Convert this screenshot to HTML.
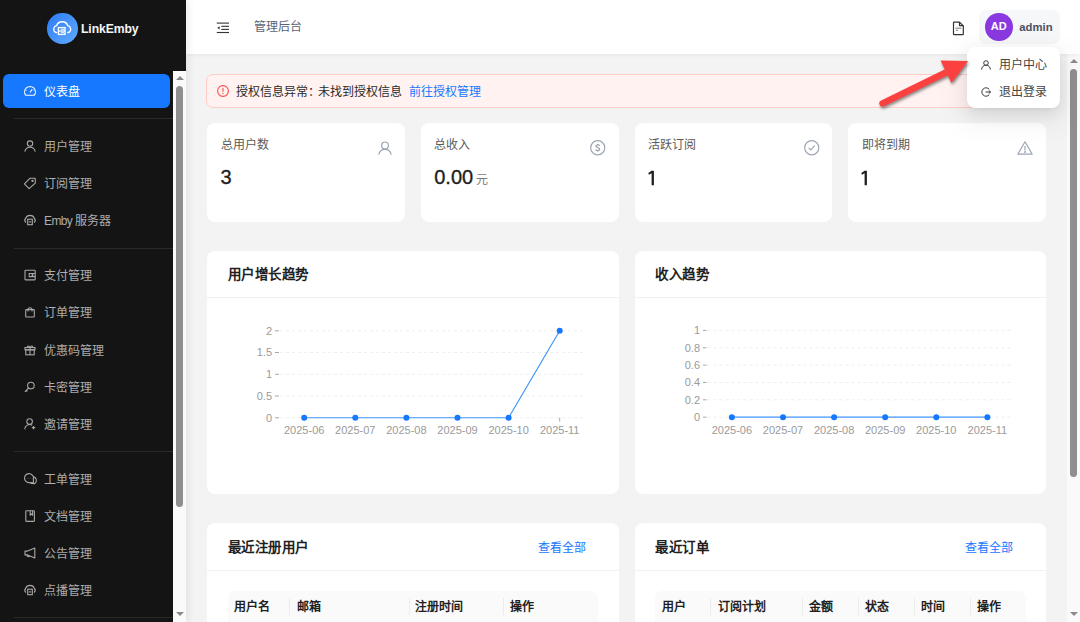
<!DOCTYPE html>
<html lang="zh-CN"><head><meta charset="utf-8">
<style>
*{box-sizing:border-box;margin:0;padding:0}
html,body{width:1080px;height:622px;overflow:hidden;background:#f3f3f3;font-family:"Liberation Sans",sans-serif;}
.abs{position:absolute}
#side{position:absolute;z-index:4;left:0;top:0;width:186px;height:622px;background:#141414;box-shadow:2px 0 8px rgba(0,0,0,0.08)}
.logo{position:absolute;left:47.4px;top:13.4px;width:30.5px;height:30.5px;border-radius:50%;background:linear-gradient(135deg,#2b7bf4 0%,#62abff 100%)}
.brand{position:absolute;left:81px;top:19px;font-size:12.2px;font-weight:bold;color:#f5f5f5;line-height:20px;letter-spacing:-0.1px}
.mi{position:absolute;left:0;width:173px;height:34px;color:rgba(255,255,255,0.66);font-size:12px;line-height:34px}
.mi .ic{position:absolute;left:23.5px;top:11px;width:12px;height:12px}
.mi .tx{position:absolute;left:44px;top:1px}
.mi.act{left:3px;width:167px;background:#1677ff;border-radius:6px;color:#fff}
.mi.act .ic{left:20.5px}
.mi.act .tx{left:41px}
.dv{position:absolute;left:13.75px;width:160px;height:1px;background:#2a2a2a}
.sb{position:absolute;background:#fafafa}
.thumb{position:absolute;background:#8f8f8f;border-radius:4px}
.tri-up{position:absolute;width:0;height:0;border-left:4px solid transparent;border-right:4px solid transparent;border-bottom:4px solid #8a8a8a}
.tri-dn{position:absolute;width:0;height:0;border-left:4px solid transparent;border-right:4px solid transparent;border-top:4px solid #8a8a8a}
#hdr{position:absolute;z-index:1;left:186px;top:0;width:894px;height:54px;background:#fff;box-shadow:0 1px 4px rgba(0,0,0,0.06)}
.card{position:absolute;background:#fff;border-radius:8px}
.st .t{position:absolute;left:13.5px;top:12px;font-size:12px;line-height:20px;color:#5a5a5a}
.st .v{position:absolute;left:13.5px;top:164px;font-size:20px;line-height:26px;color:#1f1f1f;-webkit-text-stroke:0.35px #1f1f1f}
.ch .t{position:absolute;left:20.5px;top:13px;font-size:13.5px;letter-spacing:0.5px;line-height:22px;font-weight:bold;color:#1f1f1f}
.ch .ln{position:absolute;left:0;right:0;top:46px;height:1px;background:#f0f0f0}
svg{display:block;overflow:visible}
.ax{font-size:11px;fill:#9a9a9a;font-family:"Liberation Sans",sans-serif}
.th{position:absolute;font-size:12px;font-weight:bold;color:#1f1f1f;line-height:20px}
.sep{position:absolute;width:1px;height:17px;background:#ececec}
</style></head><body>

<!-- SIDEBAR -->
<div id="side">
  <div class="logo">
    <svg width="30.5" height="30.5" viewBox="0 0 30.5 30.5"><g fill="none" stroke="#fff" stroke-width="1.35" stroke-linecap="round">
      <path d="M9.6 19.6 C7.4 19.2 6.4 17.4 6.8 15.5 C7.1 13.9 8.3 12.9 9.6 12.7 C10.4 10.2 12.5 8.7 15.2 8.7 C17.9 8.7 20 10.2 20.8 12.7 C22.2 12.9 23.3 13.9 23.6 15.5 C24 17.4 23 19.2 20.8 19.6"/>
      <rect x="11.4" y="14.6" width="6.6" height="6.8" stroke-linecap="butt"/>
      <line x1="11.4" y1="18" x2="18" y2="18" stroke-linecap="butt"/><line x1="14.2" y1="16.3" x2="16.6" y2="16.3" stroke-width="0.9"/><line x1="14.2" y1="19.7" x2="16.6" y2="19.7" stroke-width="0.9"/></g></svg>
  </div>
  <div class="brand">LinkEmby</div>

  <div class="mi act" style="top:74px"><svg class="ic" viewBox="0 0 12 12"><g fill="none" stroke="#fff" stroke-width="1.1"><path d="M1.8 10.3 A5.4 5.4 0 1 1 10.2 10.3 Z" stroke-linejoin="round"/><path d="M6 7.4 L8.2 4.3"/><path d="M1.5 5.2h1.1M9.4 5.2h1.1M6 1.5v1"/></g></svg><span class="tx">仪表盘</span></div>
  <div class="dv" style="top:118px"></div>
  <div class="mi" style="top:129px"><svg class="ic" viewBox="0 0 12 12"><g fill="none" stroke="#a8a8a8" stroke-width="1.1"><circle cx="6" cy="3.6" r="2.7"/><path d="M0.8 11.6 A5.3 5.3 0 0 1 11.2 11.6"/></g></svg><span class="tx">用户管理</span></div>
  <div class="mi" style="top:166.2px"><svg class="ic" viewBox="0 0 12 12"><g fill="none" stroke="#a8a8a8" stroke-width="1.1" stroke-linejoin="round"><path d="M6.1 1.2 L11.2 1.2 L11.3 6.1 L5.1 11.6 L0.4 6.8 Z"/><circle cx="8.5" cy="3.9" r="0.6" fill="#a8a8a8"/></g></svg><span class="tx">订阅管理</span></div>
  <div class="mi" style="top:203.4px"><svg class="ic" viewBox="0 0 12 12" style="top:10.5px"><g fill="none" stroke="#a8a8a8" stroke-width="1.1"><path d="M2 8.6 A3 3 0 0 1 1.6 4.4 A4.6 4.2 0 0 1 10.4 4.4 A3 3 0 0 1 10 8.6"/><rect x="3.7" y="5.2" width="4.6" height="5.5"/><path d="M4.8 7.9h2.4"/></g></svg><span class="tx"><span style="letter-spacing:-0.6px">Emby </span>服务器</span></div>
  <div class="dv" style="top:247.5px"></div>
  <div class="mi" style="top:258.2px"><svg class="ic" viewBox="0 0 12 12"><g fill="none" stroke="#a8a8a8" stroke-width="1.1"><rect x="1" y="1.3" width="10.2" height="9.6" rx="0.6"/><path d="M11.2 4.5 H5.2 V7.6 H11.2"/><circle cx="8.5" cy="6" r="0.5" fill="#a8a8a8"/></g></svg><span class="tx">支付管理</span></div>
  <div class="mi" style="top:295.4px"><svg class="ic" viewBox="0 0 12 12"><g fill="none" stroke="#a8a8a8" stroke-width="1.1"><rect x="1.7" y="3.6" width="8.6" height="7.4" rx="0.6"/><path d="M4 5.4 V3.7 A2 2 0 0 1 8 3.7 V5.4"/></g></svg><span class="tx">订单管理</span></div>
  <div class="mi" style="top:332.6px"><svg class="ic" viewBox="0 0 12 12"><g fill="none" stroke="#a8a8a8" stroke-width="1.1"><rect x="1" y="3.5" width="10" height="2.3"/><rect x="1.8" y="5.8" width="8.4" height="5"/><path d="M6 3.5 V10.8"/><path d="M6 3.4 C4.8 1.2 2.8 2 3.9 3.4 M6 3.4 C7.2 1.2 9.2 2 8.1 3.4"/></g></svg><span class="tx">优惠码管理</span></div>
  <div class="mi" style="top:369.8px"><svg class="ic" viewBox="0 0 12 12"><g fill="none" stroke="#a8a8a8" stroke-width="1.1"><circle cx="6.9" cy="4.6" r="3.3"/><path d="M4.6 7 L0.9 10.9 M2.3 9.5 L3.3 10.5"/></g></svg><span class="tx">卡密管理</span></div>
  <div class="mi" style="top:407px"><svg class="ic" viewBox="0 0 12 12"><g fill="none" stroke="#a8a8a8" stroke-width="1.1"><circle cx="5.6" cy="3.6" r="2.8"/><path d="M0.7 11.2 A5 5 0 0 1 8.2 7.2"/><path d="M7.8 9.6h3.4M9.5 7.9v3.4"/></g></svg><span class="tx">邀请管理</span></div>
  <div class="dv" style="top:451.2px"></div>
  <div class="mi" style="top:461.8px"><svg class="ic" viewBox="0 0 12 12"><g fill="none" stroke="#a8a8a8" stroke-width="1.1"><path d="M5.2 9.6 A4.5 4.5 0 1 1 9.3 6.5 L9.6 9.9 Z"/><path d="M9.4 3.6 A4 4 0 0 1 10.9 10.6 L6.6 10.4" /><circle cx="3.1" cy="5.2" r="0.4" fill="#8a8a8a" stroke="none"/><circle cx="4.9" cy="5.2" r="0.4" fill="#8a8a8a" stroke="none"/><circle cx="6.7" cy="5.2" r="0.4" fill="#8a8a8a" stroke="none"/></g></svg><span class="tx">工单管理</span></div>
  <div class="mi" style="top:499px"><svg class="ic" viewBox="0 0 12 12"><g fill="none" stroke="#a8a8a8" stroke-width="1.1"><rect x="1.8" y="0.8" width="8.6" height="10.6" rx="0.6"/><path d="M6.2 0.8 V5 L7.4 4 L8.6 5 V0.8"/></g></svg><span class="tx">文档管理</span></div>
  <div class="mi" style="top:536.2px"><svg class="ic" viewBox="0 0 12 12"><g fill="none" stroke="#a8a8a8" stroke-width="1.1" stroke-linejoin="round"><path d="M1 4.1 H3.6 L10.8 1.1 V10.9 L3.6 7.9 H1 Z"/><path d="M3 8 A1.4 1.4 0 0 0 5.6 8.9"/></g></svg><span class="tx">公告管理</span></div>
  <div class="mi" style="top:573.4px"><svg class="ic" viewBox="0 0 12 12" style="top:10.5px"><g fill="none" stroke="#a8a8a8" stroke-width="1.1"><path d="M2 8.6 A3 3 0 0 1 1.6 4.4 A4.6 4.2 0 0 1 10.4 4.4 A3 3 0 0 1 10 8.6"/><rect x="3.7" y="5.2" width="4.6" height="5.5"/><path d="M4.8 7.9h2.4"/></g></svg><span class="tx">点播管理</span></div>
  <div class="dv" style="top:617px"></div>

  <div class="sb" style="left:173px;top:71px;width:13px;height:551px"></div>
  <div class="tri-up" style="left:175.5px;top:75.5px"></div>
  <div class="thumb" style="left:176px;top:86px;width:7px;height:421px"></div>
  <div class="tri-dn" style="left:175.5px;top:612px"></div>
</div>

<!-- MAIN SCROLLBAR -->
<div class="sb" style="left:1067px;top:54px;width:13px;height:568px"></div>
<div class="tri-up" style="left:1069.5px;top:59px"></div>
<div class="thumb" style="left:1070px;top:69px;width:7px;height:408px"></div>
<div class="tri-dn" style="left:1069.5px;top:612px"></div>

<!-- CONTENT -->
<div id="content">
  <!-- alert -->
  <div class="abs" style="left:206px;top:74px;width:840px;height:34px;background:#fff2f0;border:1px solid #ffcdc6;border-radius:7px"></div>
  <svg class="abs" style="left:217px;top:85px" width="12" height="12" viewBox="0 0 12 12"><circle cx="6" cy="6" r="5.4" fill="none" stroke="#ff4d4f" stroke-width="1.1"/><rect x="5.45" y="2.9" width="1.1" height="3.9" fill="#ff4d4f"/><rect x="5.45" y="7.9" width="1.1" height="1.1" fill="#ff4d4f"/></svg>
  <div class="abs" style="left:236px;top:82px;font-size:12px;line-height:20px;color:#2b2b2b;white-space:nowrap">授权信息异常<span style="letter-spacing:-2px">：</span>未找到授权信息<span style="color:#1677ff;margin-left:7px">前往授权管理</span></div>

  <!-- stat cards -->
  <div class="card st" style="left:207px;top:122.5px;width:197.75px;height:99.5px">
    <div class="t">总用户数</div>
    <div class="v" style="top:41.5px">3</div>
    <svg class="abs" style="left:170.5px;top:18.5px" width="14" height="14" viewBox="0 0 14 14"><g fill="none" stroke="#9ea6b3" stroke-width="1.2"><circle cx="7" cy="4.4" r="3.4"/><path d="M0.8 13.6 A6.3 6.3 0 0 1 13.2 13.6"/></g></svg>
  </div>
  <div class="card st" style="left:420.75px;top:122.5px;width:197.75px;height:99.5px">
    <div class="t">总收入</div>
    <div class="v" style="top:41.5px">0.00<span style="font-size:12px;color:#7a7a7a;margin-left:3px;-webkit-text-stroke:0">元</span></div>
    <svg class="abs" style="left:169.5px;top:17.4px" width="15.5" height="15.5" viewBox="0 0 16 16"><g fill="none" stroke="#9ea6b3" stroke-width="1.2"><circle cx="8" cy="8" r="7.3"/><path d="M9.9 6 C9.7 5.3 9 5 8 5 C6.9 5 6.2 5.5 6.2 6.3 C6.2 8.1 10 7.5 10 9.6 C10 10.5 9.2 11 8 11 C6.9 11 6.2 10.6 6 9.8 M8 4 V5 M8 11 V12" stroke-width="1.4"/></g></svg>
  </div>
  <div class="card st" style="left:634.5px;top:122.5px;width:197.75px;height:99.5px">
    <div class="t">活跃订阅</div>
    <svg class="abs" style="left:13px;top:47px" width="8" height="16" viewBox="0 0 8 16"><path d="M3.6 0.7 H5.9 V15.2 H3.6 V3.3 L0.9 4.7 L0.3 3.1 Z" fill="#1f1f1f"/></svg>
    <svg class="abs" style="left:169.5px;top:17.4px" width="15.5" height="15.5" viewBox="0 0 16 16"><g fill="none" stroke="#9ea6b3" stroke-width="1.2"><circle cx="8" cy="8" r="7.3"/><path d="M4.8 8.2 L7 10.3 L11.2 5.9"/></g></svg>
  </div>
  <div class="card st" style="left:848.25px;top:122.5px;width:197.75px;height:99.5px">
    <div class="t">即将到期</div>
    <svg class="abs" style="left:13px;top:47px" width="8" height="16" viewBox="0 0 8 16"><path d="M3.6 0.7 H5.9 V15.2 H3.6 V3.3 L0.9 4.7 L0.3 3.1 Z" fill="#1f1f1f"/></svg>
    <svg class="abs" style="left:168.5px;top:18.5px" width="16" height="14" viewBox="0 0 16 14"><g fill="none" stroke="#9ea6b3" stroke-width="1.2" stroke-linejoin="round"><path d="M8 0.8 L15.2 13.2 H0.8 Z"/><path d="M8 5 V9.5"/><circle cx="8" cy="11" r="0.4" fill="#9ea6b3"/></g></svg>
  </div>

  <!-- chart cards -->
  <div class="card ch" style="left:207px;top:251px;width:412px;height:243px">
    <div class="t">用户增长趋势</div>
    <div class="ln"></div>
    <svg class="abs" style="left:0;top:0" width="412" height="243" viewBox="207 251 412 243">
      <g stroke="#eeeeee" stroke-width="1" stroke-dasharray="3 3">
        <path d="M280 330.8 H583"/><path d="M280 352.5 H583"/><path d="M280 374.3 H583"/><path d="M280 396 H583"/><path d="M280 417.75 H583"/>
      </g>
      <g stroke="#a8a8a8" stroke-width="1">
        <path d="M275 330.8 H279 M275 352.5 H279 M275 374.3 H279 M275 396 H279 M275 417.75 H279"/>
        <path d="M559.7 417.75 V421.5"/>
      </g>
      <g class="ax" text-anchor="end">
        <text x="272" y="334.6">2</text><text x="272" y="356.3">1.5</text><text x="272" y="378.1">1</text><text x="272" y="399.8">0.5</text><text x="272" y="421.5">0</text>
      </g>
      <g class="ax" text-anchor="middle">
        <text x="304.2" y="434">2025-06</text><text x="355.3" y="434">2025-07</text><text x="406.4" y="434">2025-08</text><text x="457.5" y="434">2025-09</text><text x="508.6" y="434">2025-10</text><text x="559.7" y="434">2025-11</text>
      </g>
      <path d="M304.2 417.75 H508.6 L559.7 330.8" fill="none" stroke="#4096ff" stroke-width="1.2"/>
      <g fill="#1677ff"><circle cx="304.2" cy="417.75" r="3"/><circle cx="355.3" cy="417.75" r="3"/><circle cx="406.4" cy="417.75" r="3"/><circle cx="457.5" cy="417.75" r="3"/><circle cx="508.6" cy="417.75" r="3"/><circle cx="559.7" cy="330.8" r="3"/></g>
    </svg>
  </div>
  <div class="card ch" style="left:634.5px;top:251px;width:411.5px;height:243px">
    <div class="t">收入趋势</div>
    <div class="ln"></div>
    <svg class="abs" style="left:0;top:0" width="412" height="243" viewBox="634.5 251 412 243">
      <g stroke="#eeeeee" stroke-width="1" stroke-dasharray="3 3">
        <path d="M707 330.4 H1010"/><path d="M707 347.8 H1010"/><path d="M707 365.1 H1010"/><path d="M707 382.5 H1010"/><path d="M707 399.8 H1010"/><path d="M707 417.2 H1010"/>
      </g>
      <g stroke="#a8a8a8" stroke-width="1">
        <path d="M702.5 330.4 H706 M702.5 347.8 H706 M702.5 365.1 H706 M702.5 382.5 H706 M702.5 399.8 H706 M702.5 417.2 H706"/>
      </g>
      <g class="ax" text-anchor="end">
        <text x="699.5" y="334.2">1</text><text x="699.5" y="351.6">0.8</text><text x="699.5" y="368.9">0.6</text><text x="699.5" y="386.3">0.4</text><text x="699.5" y="403.6">0.2</text><text x="699.5" y="421">0</text>
      </g>
      <g class="ax" text-anchor="middle">
        <text x="731.4" y="434">2025-06</text><text x="782.5" y="434">2025-07</text><text x="833.6" y="434">2025-08</text><text x="884.7" y="434">2025-09</text><text x="935.8" y="434">2025-10</text><text x="986.9" y="434">2025-11</text>
      </g>
      <path d="M731.4 417.2 H986.9" fill="none" stroke="#4096ff" stroke-width="1.2"/>
      <g fill="#1677ff"><circle cx="731.4" cy="417.2" r="3"/><circle cx="782.5" cy="417.2" r="3"/><circle cx="833.6" cy="417.2" r="3"/><circle cx="884.7" cy="417.2" r="3"/><circle cx="935.8" cy="417.2" r="3"/><circle cx="986.9" cy="417.2" r="3"/></g>
    </svg>
  </div>

  <!-- table cards -->
  <div class="card ch" style="left:207px;top:523px;width:412px;height:200px">
    <div class="t" style="top:13.5px">最近注册用户</div>
    <div class="abs" style="left:331px;top:14.5px;font-size:12px;line-height:20px;color:#1677ff">查看全部</div>
    <div class="ln" style="top:46.5px;background:#f2f2f2"></div>
    <div class="abs" style="left:20.5px;top:67.5px;width:370.5px;height:60px;background:#fafafa;border-radius:7px"></div>
    <div class="th" style="left:27px;top:73.5px">用户名</div>
    <div class="sep" style="left:82.4px;top:75px"></div>
    <div class="th" style="left:90px;top:73.5px">邮箱</div>
    <div class="sep" style="left:201.9px;top:75px"></div>
    <div class="th" style="left:208.2px;top:73.5px">注册时间</div>
    <div class="sep" style="left:295.7px;top:75px"></div>
    <div class="th" style="left:303px;top:73.5px">操作</div>
  </div>
  <div class="card ch" style="left:634.5px;top:523px;width:411.5px;height:200px">
    <div class="t" style="top:13.5px">最近订单</div>
    <div class="abs" style="left:330px;top:14.5px;font-size:12px;line-height:20px;color:#1677ff">查看全部</div>
    <div class="ln" style="top:46.5px;background:#f2f2f2"></div>
    <div class="abs" style="left:20px;top:67.5px;width:371px;height:60px;background:#fafafa;border-radius:7px"></div>
    <div class="th" style="left:27px;top:73.5px">用户</div>
    <div class="sep" style="left:75px;top:75px"></div>
    <div class="th" style="left:83px;top:73.5px">订阅计划</div>
    <div class="sep" style="left:167px;top:75px"></div>
    <div class="th" style="left:174.3px;top:73.5px">金额</div>
    <div class="sep" style="left:223.2px;top:75px"></div>
    <div class="th" style="left:230.3px;top:73.5px">状态</div>
    <div class="sep" style="left:279.2px;top:75px"></div>
    <div class="th" style="left:286.5px;top:73.5px">时间</div>
    <div class="sep" style="left:335px;top:75px"></div>
    <div class="th" style="left:342.4px;top:73.5px">操作</div>
  </div>
</div>

<!-- DROPDOWN -->
<div id="dd" style="position:absolute;z-index:2;left:0;top:0;width:1080px;height:0;white-space:nowrap">
<div class="abs" style="left:967px;top:47.4px;width:93px;height:60.2px;background:#fff;border-radius:8px;box-shadow:0 6px 16px 0 rgba(0,0,0,0.08),0 3px 6px -4px rgba(0,0,0,0.12),0 9px 28px 8px rgba(0,0,0,0.05)"></div>
<svg class="abs" style="left:981px;top:59.5px" width="10" height="10" viewBox="0 0 10 10"><g fill="none" stroke="#3a3a3a" stroke-width="1"><circle cx="5" cy="3" r="2.3"/><path d="M0.6 9.6 A4.4 4.4 0 0 1 9.4 9.6"/></g></svg>
<div class="abs" style="left:998.5px;top:55px;font-size:12px;line-height:20px;color:#454545">用户中心</div>
<svg class="abs" style="left:981px;top:86.5px" width="10" height="10" viewBox="0 0 10 10"><g fill="none" stroke="#3a3a3a" stroke-width="1"><path d="M8.2 2.2 A4.2 4.2 0 1 0 8.2 7.8"/><path d="M4.6 5 H9.6 M7.8 3.4 L9.6 5 L7.8 6.6"/></g></svg>
<div class="abs" style="left:998.5px;top:82px;font-size:12px;line-height:20px;color:#454545">退出登录</div>

</div>
<!-- RED ARROW -->
<svg class="abs" style="z-index:3;left:0;top:0;filter:drop-shadow(1px 2px 1.5px rgba(0,0,0,0.45))" width="1080" height="622" viewBox="0 0 1080 622">
  <path d="M882.5 103.3 L949 71" stroke="#fb4040" stroke-width="6.4" stroke-linecap="round" fill="none"/>
  <path d="M940.5 60.4 L968.2 61 L951.5 82.9 Z" fill="#fb4040"/>
</svg>

<!-- HEADER -->
<div id="hdr">
  <svg class="abs" style="left:30px;top:22px" width="14" height="12" viewBox="0 0 14 12"><g fill="#333">
    <rect x="0.8" y="0.55" width="12.2" height="1.1"/><rect x="5.3" y="3.75" width="7.7" height="1.1"/><rect x="5.3" y="6.85" width="7.7" height="1.1"/><rect x="0.8" y="9.95" width="12.2" height="1.1"/>
    <path d="M1.3 5.8 L3.6 4.2 V7.4 Z"/></g></svg>
  <div class="abs" style="left:67.5px;top:17px;font-size:12px;line-height:20px;color:#5b6474">管理后台</div>
  <svg class="abs" style="left:766px;top:20.5px" width="13" height="15" viewBox="0 0 13 15"><g fill="none" stroke="#333" stroke-width="1.2" stroke-linejoin="round">
    <path d="M2.2 1.1 H7.5 L11.3 4.9 V12.9 Q11.3 13.6 10.6 13.6 H2.2 Q1.5 13.6 1.5 12.9 V1.8 Q1.5 1.1 2.2 1.1 Z"/><path d="M7.5 1.1 V4.6 H11.3"/><path d="M3.3 7.2 H9.4" stroke="#777" stroke-width="1"/><path d="M4 9.3 H6" stroke="#777" stroke-width="1"/></g></svg>
  <div class="abs" style="left:792.75px;top:10px;width:81px;height:33.75px;background:#f6f7f9;border-radius:7px"></div>
  <div class="abs" style="left:799px;top:13.2px;width:27.5px;height:27.5px;border-radius:50%;background:#8a39e0;color:#fff;font-size:11px;font-weight:bold;text-align:center;line-height:27.5px">AD</div>
  <div class="abs" style="left:833.3px;top:17px;font-size:11.3px;line-height:20px;font-weight:bold;color:#4a5262">admin</div>
</div>

</body></html>
